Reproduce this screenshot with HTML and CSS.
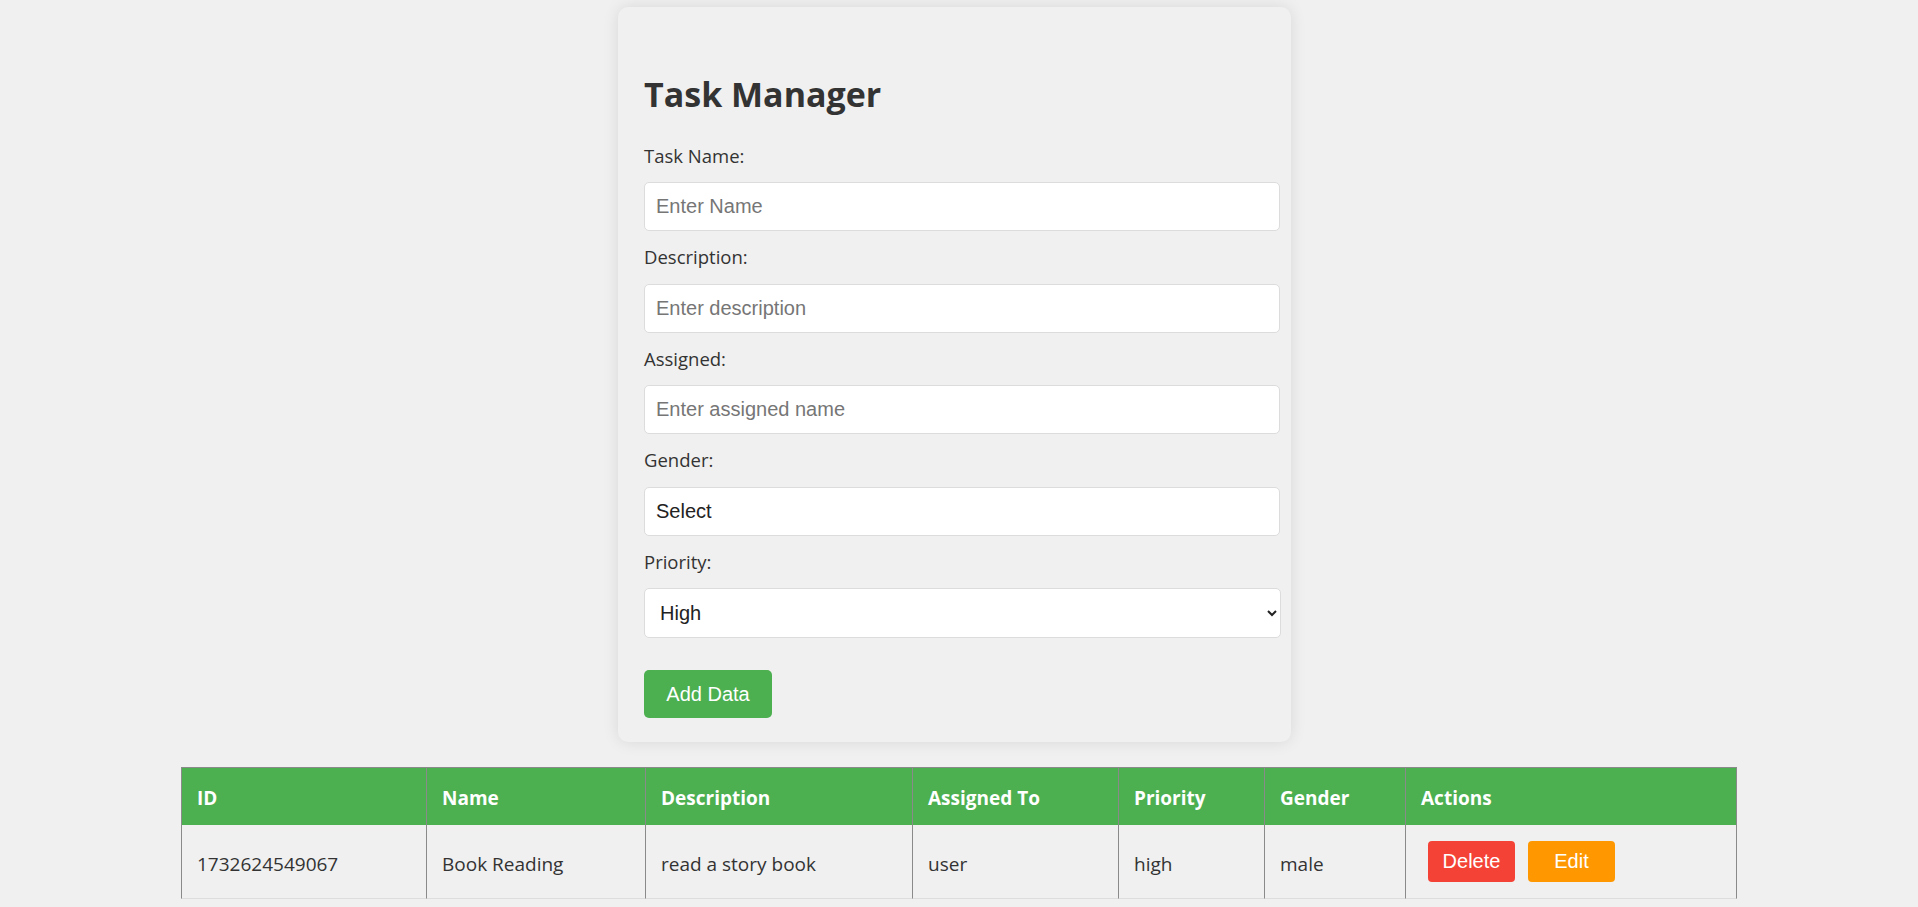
FILE: index.html
```html
<!DOCTYPE html>
<html lang="en">
<head>
<meta charset="utf-8">
<title>Task Manager</title>
<link rel="stylesheet" href="styles.css">
</head>
<body>
  <div class="card">
    <h1 class="title">Task Manager</h1>
    <form class="form">
      <label class="label" for="name">Task Name:</label>
      <input class="field" id="name" type="text" placeholder="Enter Name">
      <label class="label" for="desc">Description:</label>
      <input class="field" id="desc" type="text" placeholder="Enter description">
      <label class="label" for="assigned">Assigned:</label>
      <input class="field" id="assigned" type="text" placeholder="Enter assigned name">
      <label class="label" for="gender">Gender:</label>
      <input class="field" id="gender" type="text" value="Select">
      <label class="label" for="priority">Priority:</label>
      <select class="field select" id="priority">
        <option>High</option>
        <option>Medium</option>
        <option>Low</option>
      </select>
      <button class="btn-add" type="button">Add Data</button>
    </form>
  </div>

  <table class="tasks">
    <thead>
      <tr>
        <th class="c-id">ID</th>
        <th class="c-name">Name</th>
        <th class="c-desc">Description</th>
        <th class="c-assigned">Assigned To</th>
        <th class="c-priority">Priority</th>
        <th class="c-gender">Gender</th>
        <th class="c-actions">Actions</th>
      </tr>
    </thead>
    <tbody>
      <tr>
        <td>1732624549067</td>
        <td>Book Reading</td>
        <td>read a story book</td>
        <td>user</td>
        <td>high</td>
        <td>male</td>
        <td class="cell-actions">
          <div class="actions">
            <button class="btn btn-delete" type="button">Delete</button>
            <button class="btn btn-edit" type="button">Edit</button>
          </div>
        </td>
      </tr>
    </tbody>
  </table>
</body>
</html>
```

FILE: styles.css
```css
html, body {
  margin: 0;
  padding: 0;
}

body {
  background: #f0f0f0;
  font-family: "Open Sans", "Noto Sans", sans-serif;
  color: #333;
  padding-top: 7px;
}

.card {
  box-sizing: border-box;
  width: 673px;
  margin-left: calc(50% - 341px);
  padding: 65px 11px 24px 26px;
  background: #f0f0f0;
  border-radius: 10px;
  box-shadow: 0 0 16px rgba(0, 0, 0, 0.1);
}

.title {
  margin: 0 0 25.5px;
  font-size: 34px;
  line-height: 44px;
  font-weight: 700;
  color: #333;
}

.form {
  display: flex;
  flex-direction: column;
  align-items: flex-start;
}

.label {
  display: block;
  font-size: 18.5px;
  line-height: 27.5px;
  color: #333;
  margin-bottom: 13px;
}

.field {
  box-sizing: border-box;
  width: 636px;
  height: 49px;
  margin: 0 0 12px;
  padding: 0 11px;
  border: 1px solid #dcdcdc;
  border-radius: 5px;
  background: #fff;
  font-family: "Liberation Sans", Arial, sans-serif;
  font-size: 20px;
  color: #222;
  outline: none;
}

.field::placeholder {
  color: #767676;
}

.select {
  width: 637px;
  height: 50px;
  margin-bottom: 13px;
  padding: 0 8px 0 11px;
  color: #222;
}

.btn-add {
  margin-top: 19px;
  width: 128px;
  height: 48px;
  padding: 0;
  border: none;
  border-radius: 5px;
  background: #4caf50;
  color: #fff;
  font-family: "Liberation Sans", Arial, sans-serif;
  font-size: 20px;
}

.tasks {
  table-layout: fixed;
  width: 1556px;
  margin: 25px auto 0;
  border-collapse: separate;
  border-spacing: 0;
  font-size: 19px;
}

.tasks th,
.tasks td {
  box-sizing: border-box;
  text-align: left;
  vertical-align: middle;
  border-right: 1px solid #8a8a8a;
  padding: 0 15px;
}

.tasks th:first-child,
.tasks td:first-child {
  border-left: 1px solid #8a8a8a;
}

.tasks th {
  background: #4caf50;
  color: #fff;
  font-weight: 700;
  border-top: 1px solid #8a8a8a;
  height: 58px;
  line-height: 27px;
  padding-top: 17px;
  padding-bottom: 13px;
}

.tasks td {
  color: #333;
  height: 74px;
  line-height: 27px;
  border-bottom: 1px solid #dddddd;
  padding-top: 18px;
  padding-bottom: 13px;
}

.tasks td.cell-actions {
  vertical-align: top;
}

.c-id { width: 246px; }
.c-name { width: 219px; }
.c-desc { width: 267px; }
.c-assigned { width: 206px; }
.c-priority { width: 146px; }
.c-gender { width: 141px; }
.c-actions { width: 331px; }

.actions {
  display: flex;
  gap: 13px;
  margin: -2px 0 -14px 7px;
}

.btn {
  width: 87px;
  height: 41px;
  padding: 0;
  border: none;
  border-radius: 4px;
  color: #fff;
  font-family: "Liberation Sans", Arial, sans-serif;
  font-size: 20px;
}

.btn-delete {
  background: #f44336;
}

.btn-edit {
  background: #ff9800;
}
```
